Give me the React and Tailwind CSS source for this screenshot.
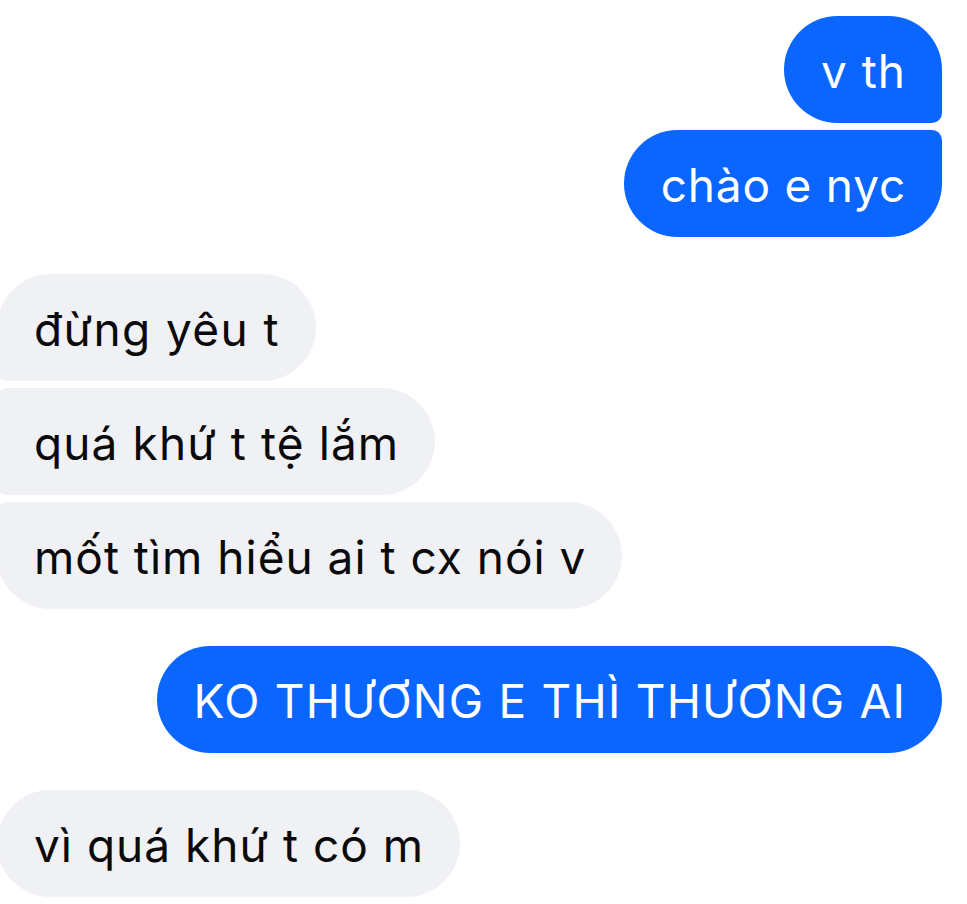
import React from 'react';

const messages = [
  { from: 'me', text: 'v th', shape: 'rounded-[54px] rounded-br-[10px]', mt: 'mt-[16px]', track: 'tracking-[1px]' },
  { from: 'me', text: 'chào e nyc', shape: 'rounded-[54px] rounded-tr-[10px]', mt: 'mt-[7px]', track: 'tracking-[0.8px]' },
  { from: 'them', text: 'đừng yêu t', shape: 'rounded-[54px] rounded-bl-[10px]', mt: 'mt-[37px]', track: 'tracking-[1.4px]' },
  { from: 'them', text: 'quá khứ t tệ lắm', shape: 'rounded-[54px] rounded-l-[10px]', mt: 'mt-[7px]', track: 'tracking-[1.1px]' },
  { from: 'them', text: 'mốt tìm hiểu ai t cx nói v', shape: 'rounded-[54px] rounded-tl-[10px]', mt: 'mt-[7px]', track: 'tracking-[1px]' },
  { from: 'me', text: 'KO THƯƠNG E THÌ THƯƠNG AI', shape: 'rounded-[54px]', mt: 'mt-[37px]', track: 'tracking-[1.25px]' },
  { from: 'them', text: 'vì quá khứ t có m', shape: 'rounded-[54px]', mt: 'mt-[37px]', track: 'tracking-[1px]' },
];

export default function App() {
  return (
    <div className="w-[967px] h-[904px] overflow-hidden bg-white font-['Inter','Liberation_Sans',sans-serif]">
      <div className="flex flex-col">
        {messages.map((m, i) => (
          <div key={i} className={`flex ${m.mt} ${m.from === 'me' ? 'justify-end pr-[25px]' : 'justify-start -ml-[3px]'}`}>
            <div
              className={`h-[107px] flex items-center pl-[37px] pr-[36px] text-[46px] leading-none ${m.track} ${m.shape} ${
                m.from === 'me' ? 'bg-[#0b66ff] text-white' : 'bg-[#f0f1f5] text-[#0a0a0a]'
              }`}
            >
              <span className="pt-[2px]">{m.text}</span>
            </div>
          </div>
        ))}
      </div>
    </div>
  );
}
